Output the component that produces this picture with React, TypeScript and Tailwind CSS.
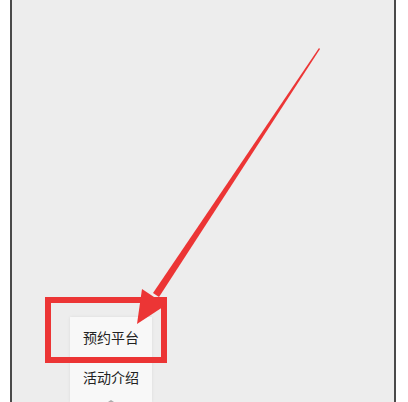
import React from "react";

export default function App() {
  return (
    <div
      className="relative w-[408px] h-[402px] bg-white overflow-hidden"
      style={{ fontFamily: '"Noto Sans CJK SC", "Noto Sans", sans-serif' }}
    >
      <div className="ml-[10px] w-[386px] h-full bg-[#ededed] border-l-[2px] border-r-[2px] border-[#4a4a4a]" />

      {/* popup menu */}
      <div className="absolute left-[70px] top-[317px] w-[82px] h-[85px] bg-[#f8f8f8] shadow-[0_0_3px_rgba(0,0,0,0.08)] flex flex-col items-center pt-[9px] text-[14px] text-[#222] leading-[20px]">
        <div className="py-[1px]">预约平台</div>
        <div className="mt-[19px]">活动介绍</div>
        <div className="absolute bottom-0 left-[38px] w-0 h-0 border-l-[3px] border-r-[3px] border-b-[2px] border-l-transparent border-r-transparent border-b-[#aaa]" />
      </div>

      {/* red highlight box */}
      <div className="absolute left-[45px] top-[297px] w-[122px] h-[66px] border-[6px] border-[#ec3535]" />

      {/* arrow */}
      <svg className="absolute left-0 top-0" width="408" height="402" viewBox="0 0 408 402">
        <polygon points="319,48 320,49 159,297 153,293" fill="#ec3535" />
        <polygon points="137,324 142,289 166,305" fill="#ec3535" />
      </svg>
    </div>
  );
}
